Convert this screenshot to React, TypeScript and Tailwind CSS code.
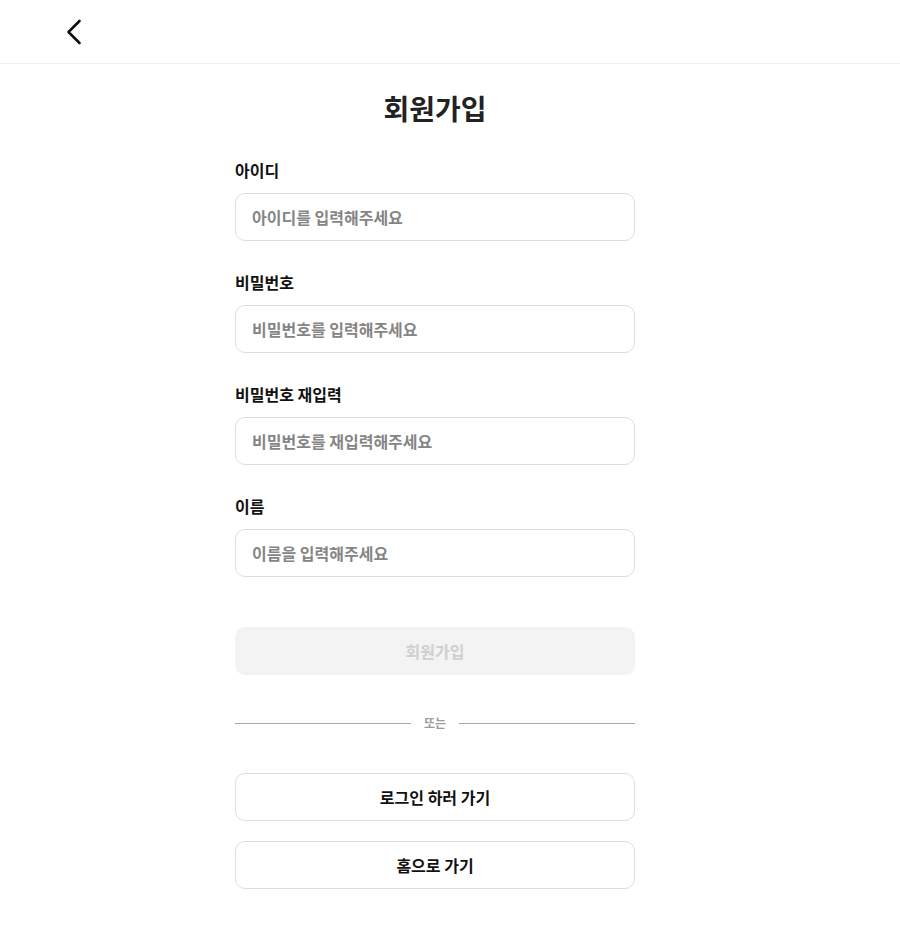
import { useState } from "react";

const FIELDS = [
  { key: "id", label: "아이디", placeholder: "아이디를 입력해주세요", type: "text" },
  { key: "pw", label: "비밀번호", placeholder: "비밀번호를 입력해주세요", type: "password" },
  { key: "pw2", label: "비밀번호 재입력", placeholder: "비밀번호를 재입력해주세요", type: "password" },
  { key: "name", label: "이름", placeholder: "이름을 입력해주세요", type: "text" },
];

const FONT = "font-['Noto_Sans_CJK_KR','Noto_Sans',sans-serif]";

export default function App() {
  const [values, setValues] = useState<Record<string, string>>({});
  const filled = FIELDS.every((f) => values[f.key]);

  return (
    <div className={`min-h-screen bg-white ${FONT}`}>
      {/* Header */}
      <header className="h-16 flex items-center pl-[64px] border-b border-[#f0f0f0]">
        <button aria-label="뒤로" className="p-0">
          <svg width="18" height="28" viewBox="0 0 18 28" fill="none">
            <path d="M15.5 3 L4.5 14 L15.5 25" stroke="#111" strokeWidth="2.6" strokeLinecap="round" strokeLinejoin="round" />
          </svg>
        </button>
      </header>

      <div className="pr-[30px]">
        <main className="w-[400px] mx-auto flex flex-col pb-12">
          <h1 className="mt-[26px] text-center text-[28px] leading-9 font-bold text-[#222]">회원가입</h1>

          <div className="mt-[32px] flex flex-col gap-[29px]">
            {FIELDS.map((f) => (
              <div key={f.key} className="flex flex-col gap-[11px]">
                <label className="text-base leading-6 font-bold text-[#111]">{f.label}</label>
                <input
                  type={f.type}
                  placeholder={f.placeholder}
                  value={values[f.key] ?? ""}
                  onChange={(e) => setValues({ ...values, [f.key]: e.target.value })}
                  className="h-12 rounded-[10px] border border-[#dedede] px-4 text-base font-bold text-[#222] placeholder:text-[#858585] outline-none"
                />
              </div>
            ))}
          </div>

          <button
            disabled={!filled}
            className="mt-[50px] h-12 rounded-[10px] bg-[#f3f3f3] text-base font-bold text-[#cfcfcf] enabled:bg-[#222] enabled:text-white"
          >
            회원가입
          </button>

          <div className="mt-[38px] h-5 flex items-center gap-[13px]">
            <div className="flex-1 h-px bg-[#a8a8a8]" />
            <span className="text-xs text-[#9a9a9a] font-bold">또는</span>
            <div className="flex-1 h-px bg-[#a8a8a8]" />
          </div>

          <div className="mt-[40px] flex flex-col gap-5">
            <button className="h-12 rounded-[10px] border border-[#dedede] bg-white text-base font-bold text-[#111]">
              로그인 하러 가기
            </button>
            <button className="h-12 rounded-[10px] border border-[#dedede] bg-white text-base font-bold text-[#111]">
              홈으로 가기
            </button>
          </div>
        </main>
      </div>
    </div>
  );
}
